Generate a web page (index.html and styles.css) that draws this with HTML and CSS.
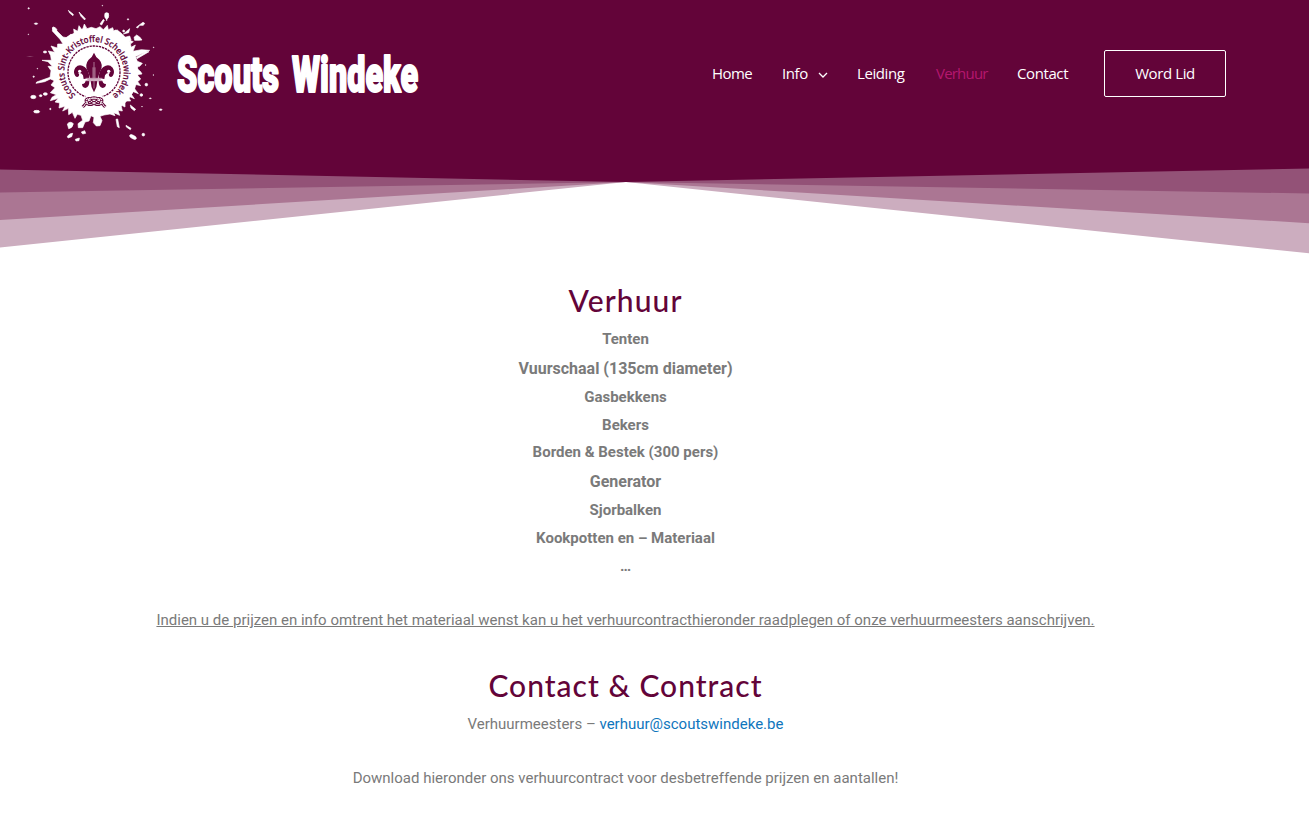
FILE: index.html
```
<!DOCTYPE html>
<html lang="nl">
<head>
<meta charset="utf-8">
<title>Verhuur – Scouts Windeke</title>
<link rel="stylesheet" href="styles.css">
</head>
<body>
<header class="header">
  <div class="bar">
    <a class="brand">
      <svg class="badge" viewBox="0 0 450 450">
        <defs><path id="ring" d="M167 285A89 89 0 1 1 277 285"/></defs>
        <g fill="#fff" stroke="#fff" stroke-width="2">
          <ellipse cx="227" cy="216" rx="127" ry="128"/>
          <path d="M193 72L201 86 214 82 228 86 240 80 250 89 262 76 265 89 278 83 281 92 292 90 302 99 303 114 315 112 329 108 333 119 323 130 333 142 346 135 339 154 364 149 389 151 365 161 346 170 352 184 367 190 359 199 347 202 362 215 366 222 351 224 362 237 353 245 362 257 345 253 342 264 355 281 340 275 334 283 343 296 324 288 332 303 315 303 315 321 303 315 307 333 294 331 299 346 281 338 285 347 270 342 252 345 240 349 246 362 240 377 229 378 220 368 222 352 213 347 207 363 195 366 188 383 175 383 174 371 188 361 183 346 172 343 165 355 157 337 146 344 145 325 128 333 135 319 117 324 119 309 105 306 115 295 91 302 96 292 109 284 91 278 105 263 93 255 103 242 91 237 74 245 48 250 50 246 90 232 93 212 84 199 97 199 84 185 66 181 94 181 92 167 85 153 104 157 93 138 112 144 113 132 129 132 120 118 97 93 98 85 111 93 129 111 140 113 152 103 163 104 161 87 173 94 177 77 187 91Z"/>
          <path d="M122 118L136 114 165 98 190 86V120H130ZM285 90L303 99 330 125 335 150 300 125Z"/>
          <ellipse cx="260" cy="47" rx="6" ry="9"/><path d="M255 40L265 40 260 62Z"/>
          <path d="M145 31L160 43 159 47 149 39ZM177 36L196 56 194 60 183 49ZM240 72L250 58 253 61 245 75ZM349 82L359 74 369 67 374 70 370 76 359 76 353 84ZM387 155L351 176 349 172 377 155Z"/>
          <path d="M342 112L350 105 359 111 366 120 357 121 344 121ZM310 102L329 86 326 98ZM329 121L340 125 332 131ZM343 190L363 190 359 195 345 198Z"/>
          <ellipse cx="104" cy="87" rx="8" ry="4" transform="rotate(35 104 87)"/>
          <ellipse cx="48" cy="71" rx="5" ry="2"/><circle cx="26" cy="25" r="2"/><circle cx="25" cy="103" r="1"/><circle cx="247" cy="17" r="1"/><circle cx="324" cy="58" r="2"/><circle cx="311" cy="93" r="3"/>
          <ellipse cx="75" cy="156" rx="5" ry="3"/><ellipse cx="30" cy="170" rx="12" ry=".5" stroke="none"/><ellipse cx="40" cy="291" rx="8" ry="5"/><ellipse cx="62" cy="287" rx="4" ry="3"/><ellipse cx="76" cy="282" rx="6" ry="4"/><ellipse cx="50" cy="335" rx="9" ry="4"/><circle cx="91" cy="327" r="2"/><circle cx="41" cy="230" r="2"/><circle cx="52" cy="206" r="1"/>
          <path d="M142 372Q150 362 160 371Q158 384 146 386ZM142 409Q150 399 158 400L155 410 144 414ZM166 418L178 414 177 422 168 423ZM184 396L194 392 197 400 188 402ZM288 358L293 357 298 383 292 380ZM318 376L333 385 331 389 319 381ZM331 315L347 328 343 332 333 324Z"/>
          <ellipse cx="339" cy="411" rx="11" ry="5" transform="rotate(28 339 411)"/><circle cx="370" cy="404" r="4"/><circle cx="364" cy="285" r="4"/><circle cx="379" cy="254" r="4"/><ellipse cx="422" cy="329" rx="4" ry="2"/><ellipse cx="391" cy="295" rx="3" ry="1"/><circle cx="400" cy="225" r="1"/>
          <circle cx="366" cy="320" r="1"/><circle cx="401" cy="142" r="1"/><circle cx="377" cy="195" r="1"/>
        </g>
        <text class="badge-text"><textPath href="#ring" textLength="440" lengthAdjust="spacingAndGlyphs">Scouts Sint-Kristoffel Scheldewindeke</textPath></text>
        <circle cx="222" cy="216" r="78" fill="none" stroke="#630439" stroke-width="4" stroke-dasharray="7 2.5"/>
        <g fill="#630439">
          <path d="M222 158Q226 170 238 179Q250 193 242 211Q236 224 233 236H211Q208 224 202 211Q194 193 206 179Q218 170 222 158Z"/>
          <path d="M208 235Q208 211 194 201Q178 190 166 203Q158 216 166 228Q171 234 176 229Q180 224 175 219Q184 217 189 226L191 237Z"/>
          <path d="M236 235Q236 211 250 201Q266 190 278 203Q286 216 278 228Q273 234 268 229Q264 224 269 219Q260 217 255 226L253 237Z"/>
          <path d="M212 243H232Q232 260 222 277Q212 260 212 243ZM208 243Q208 262 196 264Q186 262 186 251Q194 254 197 243ZM236 243Q236 262 248 264Q258 262 258 251Q250 254 247 243Z"/>
        </g>
        <g fill="#fff"><circle cx="179" cy="214" r="5"/><circle cx="266" cy="214" r="5"/></g>
        <path d="M222 186V265M219 202V235M225 202V235" stroke="#cfacc0" stroke-width="2" fill="none"/>
        <path d="M197 235H247M197 242H247M202 238H242" stroke="#c8a0b7" stroke-width="3" fill="none"/>
        <path d="M196 288H248V322H196Z" fill="#fff"/>
        <g fill="none" stroke="#630439" stroke-width="9">
          <path id="rope" d="M188 321L205 303Q213 291 230 295Q249 295 245 305Q242 317 226 312L202 296M256 321L239 303Q231 291 214 295Q195 295 199 305Q202 317 218 312L242 296"/>
        </g>
        <use href="#rope" fill="none" stroke="#fff" stroke-width="3.5" stroke-dasharray="4 2"/>
      </svg>
      <svg class="wordmark" viewBox="0 0 250 60">
        <text transform="translate(3 47) scale(1 1.48)" textLength="102" lengthAdjust="spacingAndGlyphs">Scouts</text>
        <text transform="translate(118 46.5) scale(1 1.48)" textLength="126" lengthAdjust="spacingAndGlyphs">Windeke</text>
      </svg>
    </a>
    <nav class="nav">
      <a class="home">Home</a>
      <a class="info">Info<svg viewBox="0 0 10 6"><path d="M1 1L5 5 9 1"/></svg></a>
      <a class="leiding">Leiding</a>
      <a class="active">Verhuur</a>
      <a class="contact">Contact</a>
      <a class="button">Word Lid</a>
    </nav>
  </div>
  <svg class="fan" viewBox="0 0 1309 94">
    <path fill="#ccadbf" d="M0 0H1309V93.3L626 22 0 87.5Z"/>
    <path fill="#ab7693" d="M0 0H1309V63.2L626 22 0 60Z"/>
    <path fill="#935277" d="M0 0H1309V33.5L626 22 0 32.5Z"/>
    <path fill="#630439" d="M0 0H1309V8.4L626 22 0 9.5Z"/>
  </svg>
</header>
<main class="content">
  <h2 class="title title-rent">Verhuur</h2>
  <ul class="items">
    <li>Tenten</li>
    <li class="large">Vuurschaal (135cm diameter)</li>
    <li>Gasbekkens</li>
    <li>Bekers</li>
    <li class="tight">Borden &amp; Bestek (300 pers)</li>
    <li class="large generator">Generator</li>
    <li>Sjorbalken</li>
    <li>Kookpotten en – Materiaal</li>
    <li>…</li>
  </ul>
  <p class="note">Indien u de prijzen en info omtrent het materiaal wenst kan u het verhuurcontracthieronder raadplegen of onze verhuurmeesters aanschrijven.</p>
  <h2 class="title title-contact">Contact &amp; Contract</h2>
  <p>Verhuurmeesters – <a class="mail">verhuur@scoutswindeke.be</a></p>
  <p class="download">Download hieronder ons verhuurcontract voor desbetreffende prijzen en aantallen!</p>
</main>
</body>
</html>
```
FILE: styles.css
```
* { box-sizing: border-box; }
body {
  margin: 0;
  height: 821px;
  overflow: hidden;
  background: #fff;
  color: #7a7a7a;
  font: 15px/28px Roboto, sans-serif;
}
.bar {
  display: flex;
  justify-content: space-between;
  height: 160px;
  padding: 0 83px 0 20px;
  background: #630439;
}
.brand { display: flex; }
.badge { width: 150px; height: 150px; }
.badge-text {
  font: 600 27px "Open Sans", sans-serif;
  fill: #630439;
  stroke: #630439;
  stroke-width: .5px;
}
.wordmark { width: 250px; height: 60px; margin: 45px 0 0 4px; }
.wordmark text {
  font: 900 34px Roboto, sans-serif;
  fill: #fff;
  stroke: #fff;
  stroke-width: 1.4px;
  stroke-linejoin: round;
}
.nav {
  display: flex;
  align-items: center;
  height: 47px;
  margin-top: 50px;
  color: #fff;
  font: 15px "Open Sans", sans-serif;
  white-space: nowrap;
}
.nav a { flex: none; padding-bottom: 2px; letter-spacing: -.4px; }
.nav .home { width: 70px; letter-spacing: -.6px; }
.nav .info { width: 75px; }
.nav .info svg {
  width: 10px;
  height: 6px;
  margin: 0 0 1px 10px;
  fill: none;
  stroke: #fff;
  stroke-width: 1.3;
}
.nav .leiding { width: 79px; }
.nav .active { width: 81px; color: #b5176e; letter-spacing: -.8px; }
.nav .contact { width: 87px; }
.nav .button {
  width: 122px;
  height: 47px;
  padding: 0;
  border: 1px solid #fff;
  border-radius: 2px;
  line-height: 45px;
  text-align: center;
}
.fan { display: block; width: 100%; height: 94px; }
.content { width: 1251px; padding-top: 28px; text-align: center; }
.title {
  margin: 0;
  color: #630439;
  font: 500 30px/36px Lato, sans-serif;
}
.title-rent { letter-spacing: 1.1px; }
.title-contact { margin-top: 33px; letter-spacing: 1px; }
.items {
  margin: 7px 0 0;
  padding: 0;
  list-style: none;
  font-weight: 700;
}
.items li { height: 28px; }
.items .large { height: 29.5px; font-size: 16px; line-height: 31px; }
.items .tight { line-height: 26px; }
.items .generator { line-height: 29px; }
p { margin: 0; }
.note { margin-top: 26px; text-decoration: underline; }
.title-contact + p { margin-top: 7px; }
.mail { color: #0f76bd; }
.download { margin-top: 26px; }
```
